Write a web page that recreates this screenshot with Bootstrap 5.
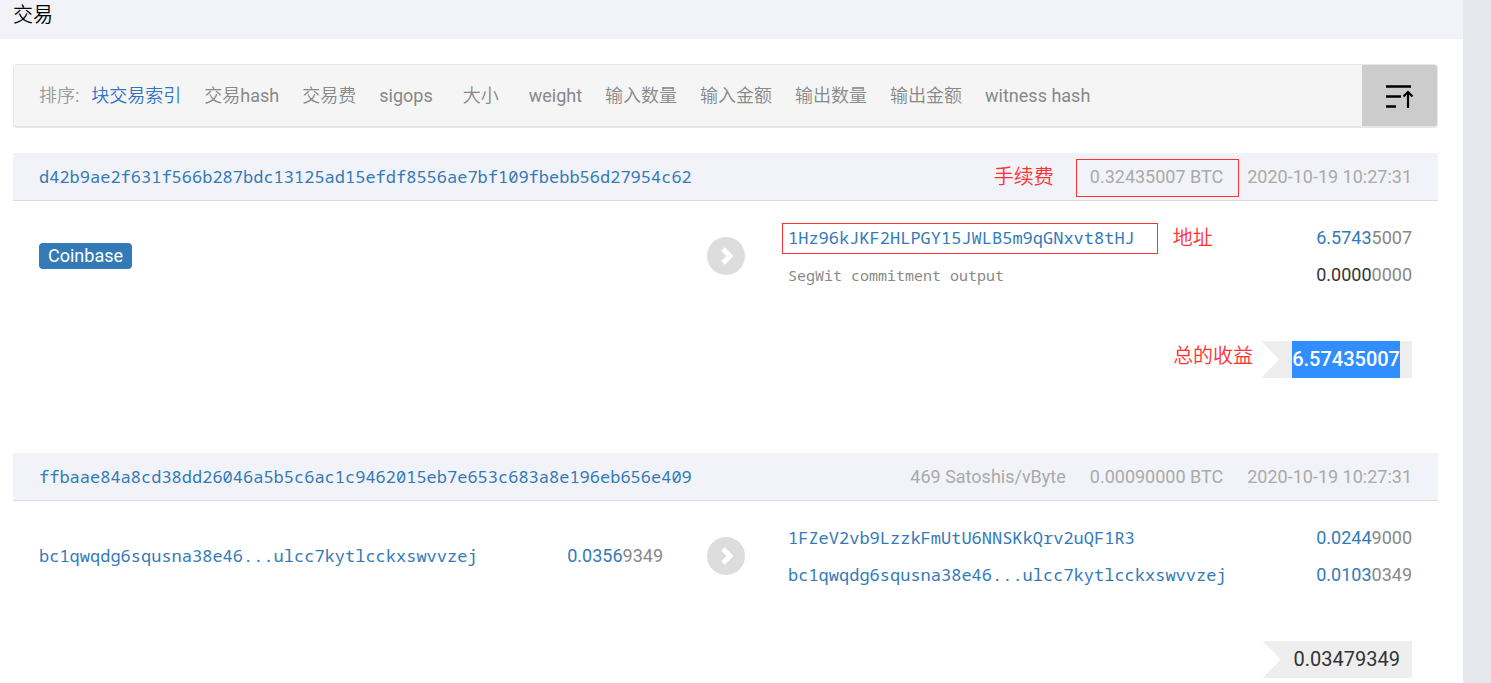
<!DOCTYPE html>
<html lang="zh-CN">
<head>
<meta charset="utf-8">
<meta name="viewport" content="width=device-width, initial-scale=1">
<title>交易</title>
<link rel="stylesheet" href="https://cdn.jsdelivr.net/npm/bootstrap@5.3.0/dist/css/bootstrap.min.css">
<style>
  body { font-family: Roboto, "Noto Sans CJK SC DemiLight", "Noto Sans CJK SC", sans-serif; font-size: 18px; line-height: 26px; color: #333; background: #fff; overflow: hidden; }
  a { color: #337ab7; text-decoration: none; }
  a:hover { text-decoration: underline; }
  .page-main { min-width: 0; }
  .page-gutter { width: 28px; background: #e5e9ee; }
  .title-bar { height: 39px; background: #f2f3f8; padding-left: 13px; }
  .title-bar h1 { font-size: 20px; line-height: 30px; font-weight: 400; color: #000; }
  .content-area { padding: 25px 25px 0 13px; }

  .sort-bar { min-height: 64px; background: #f5f5f5; border: 1px solid #e6e6e6; border-bottom-width: 2px; border-radius: 4px; margin-bottom: 25px; overflow: hidden; }
  .sort-list { padding: 1px 0 0 25px; column-gap: 23px; }
  .sort-list a { color: #888; min-width: 50px; text-align: center; }
  .sort-list a.current { color: #3074c4; }
  .sort-label { color: #999; margin-right: -11px; }
  .sort-toggle { width: 75px; background: #ccc; border: 0; border-radius: 0; padding: 0; }

  .tx-head { min-height: 48px; background: #f2f3f8; border-bottom: 1px solid #dcdcdc; padding: 0 26px; }
  .tx-meta { color: #aaa; column-gap: 24px; }
  .tx-hash, .tx-addr { font-family: "Noto Sans Mono", "DejaVu Sans Mono", monospace; font-size: 17px; }
  .tx-body { padding: 18px 26px 0; }
  .tx-side { flex: 1 1 0; min-width: 0; }
  .tx-arrow { width: 125px; }
  .tx-row { min-height: 37px; }
  .tx-note { font-family: "Noto Sans Mono", "DejaVu Sans Mono", monospace; font-size: 15px; color: #888; }
  .coins { color: #337ab7; }
  .coins.plain { color: #333; }
  .coins small { font-size: inherit; color: #888; }
  .coinbase-tag { background: #337ab7; font-size: 18px; font-weight: 400; line-height: 26px; padding: 0 9px; border-radius: 4px; }
  .tx-foot { padding: 48px 26px 75px; }
  .tx-total { height: 37px; line-height: 37px; font-size: 20px; background: #eee; padding: 0 12px 0 31px; clip-path: polygon(0 0, 100% 0, 100% 100%, 0 100%, 18px 50%); }
  .tx-total .picked { display: block; background: #308efe; color: #fff; font-weight: 500; }

  .remark { font-size: 20px; line-height: 30px; color: #ff3030; }
  .remark-addr { margin-left: 38px; }
  .framed { position: relative; }
  .framed::after { content: ""; position: absolute; border: 1px solid #f33; pointer-events: none; }
  .fee-frame::after { inset: -5px -16px -7px -14px; }
  .addr-frame::after { inset: -2px -23px -3px -6px; }
</style>
</head>
<body>
<div class="d-flex min-vh-100">
  <main class="page-main flex-grow-1">
    <header class="title-bar"><h1 class="m-0">交易</h1></header>
    <div class="content-area">

      <nav class="sort-bar d-flex align-items-stretch" aria-label="排序">
        <div class="sort-list d-flex flex-wrap align-items-center flex-grow-1">
          <span class="sort-label">排序:</span>
          <a href="#" class="current">块交易索引</a>
          <a href="#">交易hash</a>
          <a href="#">交易费</a>
          <a href="#">sigops</a>
          <a href="#">大小</a>
          <a href="#">weight</a>
          <a href="#">输入数量</a>
          <a href="#">输入金额</a>
          <a href="#">输出数量</a>
          <a href="#">输出金额</a>
          <a href="#">witness hash</a>
        </div>
        <button type="button" class="sort-toggle btn" aria-label="升序">
          <svg width="30" height="26" viewBox="0 0 30 26" fill="none" stroke="#000" aria-hidden="true">
            <path d="M1 3.500h25M1 13.500h15M1 23.500h10" stroke-width="2.5"/>
            <path d="M23 25V9M18.500 13.500L23 9l4.500 4.500" stroke-width="2.2"/>
          </svg>
        </button>
      </nav>

      <article>
        <header class="tx-head d-flex flex-wrap align-items-center justify-content-between">
          <a href="#" class="tx-hash">d42b9ae2f631f566b287bdc13125ad15efdf8556ae7bf109fbebb56d27954c62</a>
          <div class="tx-meta d-flex align-items-center">
            <span class="remark me-2 pe-1">手续费</span>
            <span class="framed fee-frame">0.32435007 BTC</span>
            <time>2020-10-19 10:27:31</time>
          </div>
        </header>
        <div class="tx-body d-flex align-items-center">
          <div class="tx-side"><span class="badge coinbase-tag">Coinbase</span></div>
          <div class="tx-arrow d-flex justify-content-center">
            <svg width="38" height="38" viewBox="0 0 38 38" aria-hidden="true"><circle cx="19" cy="19" r="19" fill="#ddd"/><path d="M16 12l7 7-7 7" fill="none" stroke="#fff" stroke-width="5"/></svg>
          </div>
          <div class="tx-side">
            <div class="tx-row d-flex align-items-center">
              <a href="#" class="tx-addr framed addr-frame">1Hz96kJKF2HLPGY15JWLB5m9qGNxvt8tHJ</a>
              <span class="remark remark-addr">地址</span>
              <span class="coins ms-auto">6.5743<small>5007</small></span>
            </div>
            <div class="tx-row d-flex align-items-center">
              <span class="tx-note">SegWit commitment output</span>
              <span class="coins plain ms-auto">0.0000<small>0000</small></span>
            </div>
          </div>
        </div>
        <footer class="tx-foot d-flex justify-content-end">
          <span class="remark me-2">总的收益</span>
          <div class="tx-total"><span class="picked">6.57435007</span></div>
        </footer>
      </article>

      <article>
        <header class="tx-head d-flex flex-wrap align-items-center justify-content-between">
          <a href="#" class="tx-hash">ffbaae84a8cd38dd26046a5b5c6ac1c9462015eb7e653c683a8e196eb656e409</a>
          <div class="tx-meta d-flex align-items-center">
            <span>469 Satoshis/vByte</span>
            <span>0.00090000 BTC</span>
            <time>2020-10-19 10:27:31</time>
          </div>
        </header>
        <div class="tx-body d-flex align-items-center">
          <div class="tx-side d-flex align-items-center">
            <a href="#" class="tx-addr">bc1qwqdg6squsna38e46...ulcc7kytlcckxswvvzej</a>
            <span class="coins ms-auto">0.0356<small>9349</small></span>
          </div>
          <div class="tx-arrow d-flex justify-content-center">
            <svg width="38" height="38" viewBox="0 0 38 38" aria-hidden="true"><circle cx="19" cy="19" r="19" fill="#ddd"/><path d="M16 12l7 7-7 7" fill="none" stroke="#fff" stroke-width="5"/></svg>
          </div>
          <div class="tx-side">
            <div class="tx-row d-flex align-items-center">
              <a href="#" class="tx-addr">1FZeV2vb9LzzkFmUtU6NNSKkQrv2uQF1R3</a>
              <span class="coins ms-auto">0.0244<small>9000</small></span>
            </div>
            <div class="tx-row d-flex align-items-center">
              <a href="#" class="tx-addr">bc1qwqdg6squsna38e46...ulcc7kytlcckxswvvzej</a>
              <span class="coins ms-auto">0.0103<small>0349</small></span>
            </div>
          </div>
        </div>
        <footer class="tx-foot d-flex justify-content-end pb-1">
          <div class="tx-total">0.03479349</div>
        </footer>
      </article>

    </div>
  </main>
  <aside class="page-gutter flex-shrink-0"></aside>
</div>
<script src="https://cdn.jsdelivr.net/npm/bootstrap@5.3.0/dist/js/bootstrap.bundle.min.js"></script>
</body>
</html>
